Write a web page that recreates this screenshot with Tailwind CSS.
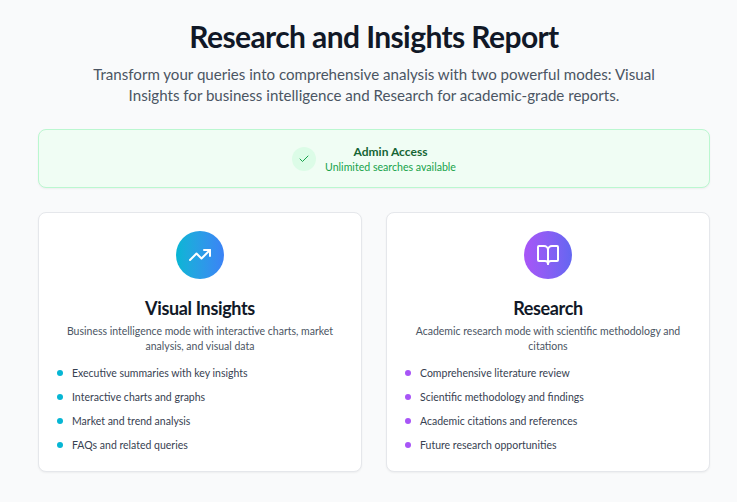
<!DOCTYPE html>
<html lang="en">
<head>
  <meta charset="UTF-8" />
  <title>Research and Insights Report</title>
  <script src="https://cdn.jsdelivr.net/npm/@tailwindcss/browser@4"></script>
</head>
<body class="bg-[#f9fafb] font-['Lato',sans-serif] overflow-hidden">
  <div class="w-[737px] h-[502px] pl-[38px] pr-[27px] pt-[17px]">
    <!-- header -->
    <div class="text-center mb-[23px]">
      <h1 class="text-[30px] leading-[38px] tracking-[-0.6px] font-bold text-[#111827]">Research and Insights Report</h1>
      <p class="mt-[9px] mx-auto w-[576px] text-[15.1px] leading-[21px] text-[#4b5563]">Transform your queries into comprehensive analysis with two powerful modes: Visual Insights for business intelligence and Research for academic-grade reports.</p>
    </div>

    <!-- admin banner -->
    <div class="h-[59px] rounded-lg border border-[#bbf7d0] bg-[#f0fdf4] shadow-xs flex items-center justify-center gap-[9px]">
      <div class="w-[24px] h-[24px] rounded-full bg-[#dcfce7] flex items-center justify-center">
        <svg class="w-[12px] h-[12px] text-[#16a34a]" viewBox="0 0 24 24" fill="none" stroke="currentColor" stroke-width="2" stroke-linecap="round" stroke-linejoin="round"><path d="M20 6 9 17l-5-5"/></svg>
      </div>
      <div class="text-center pt-[2px]">
        <div class="text-[12px] leading-[16px] font-bold text-[#166534]">Admin Access</div>
        <div class="text-[10.6px] leading-[15px] text-[#16a34a]">Unlimited searches available</div>
      </div>
    </div>

    <!-- mode cards -->
    <div class="grid grid-cols-2 gap-[24px] mt-[24px]">
      <div class="h-[260px] rounded-lg border border-[#e5e7eb] bg-white shadow-xs px-[18px] pt-[18px]">
        <div class="w-[48px] h-[48px] mx-auto rounded-full bg-gradient-to-r from-[#06b6d4] to-[#3b82f6] flex items-center justify-center">
          <svg class="w-[24px] h-[24px] text-white" viewBox="0 0 24 24" fill="none" stroke="currentColor" stroke-width="2" stroke-linecap="round" stroke-linejoin="round"><path d="M22 7 13.5 15.5 8.5 10.5 2 17"/><path d="M16 7h6v6"/></svg>
        </div>
        <h2 class="mt-[15px] text-center text-[18px] leading-[28px] tracking-[-0.35px] font-bold text-[#111827]">Visual Insights</h2>
        <p class="mt-[2px] text-center text-[10.5px] leading-[15px] text-[#4b5563]">Business intelligence mode with interactive charts, market analysis, and visual data</p>
        <ul class="mt-[11px] flex flex-col gap-[8px] text-[10.5px] leading-[16px] text-[#374151]">
          <li class="flex items-center gap-[9px]"><span class="w-[6px] h-[6px] rounded-full bg-[#06b6d4]"></span>Executive summaries with key insights</li>
          <li class="flex items-center gap-[9px]"><span class="w-[6px] h-[6px] rounded-full bg-[#06b6d4]"></span>Interactive charts and graphs</li>
          <li class="flex items-center gap-[9px]"><span class="w-[6px] h-[6px] rounded-full bg-[#06b6d4]"></span>Market and trend analysis</li>
          <li class="flex items-center gap-[9px]"><span class="w-[6px] h-[6px] rounded-full bg-[#06b6d4]"></span>FAQs and related queries</li>
        </ul>
      </div>

      <div class="h-[260px] rounded-lg border border-[#e5e7eb] bg-white shadow-xs px-[18px] pt-[18px]">
        <div class="w-[48px] h-[48px] mx-auto rounded-full bg-gradient-to-r from-[#a855f7] to-[#6366f1] flex items-center justify-center">
          <svg class="w-[24px] h-[24px] text-white" viewBox="0 0 24 24" fill="none" stroke="currentColor" stroke-width="2" stroke-linecap="round" stroke-linejoin="round"><path d="M12 7v14"/><path d="M3 18a1 1 0 0 1-1-1V4a1 1 0 0 1 1-1h5a4 4 0 0 1 4 4 4 4 0 0 1 4-4h5a1 1 0 0 1 1 1v13a1 1 0 0 1-1 1h-6a3 3 0 0 0-3 3 3 3 0 0 0-3-3z"/></svg>
        </div>
        <h2 class="mt-[15px] text-center text-[18px] leading-[28px] tracking-[-0.35px] font-bold text-[#111827]">Research</h2>
        <p class="mt-[2px] text-center text-[10.5px] leading-[15px] text-[#4b5563]">Academic research mode with scientific methodology and citations</p>
        <ul class="mt-[11px] flex flex-col gap-[8px] text-[10.5px] leading-[16px] text-[#374151]">
          <li class="flex items-center gap-[9px]"><span class="w-[6px] h-[6px] rounded-full bg-[#a855f7]"></span>Comprehensive literature review</li>
          <li class="flex items-center gap-[9px]"><span class="w-[6px] h-[6px] rounded-full bg-[#a855f7]"></span>Scientific methodology and findings</li>
          <li class="flex items-center gap-[9px]"><span class="w-[6px] h-[6px] rounded-full bg-[#a855f7]"></span>Academic citations and references</li>
          <li class="flex items-center gap-[9px]"><span class="w-[6px] h-[6px] rounded-full bg-[#a855f7]"></span>Future research opportunities</li>
        </ul>
      </div>
    </div>
  </div>
</body>
</html>
